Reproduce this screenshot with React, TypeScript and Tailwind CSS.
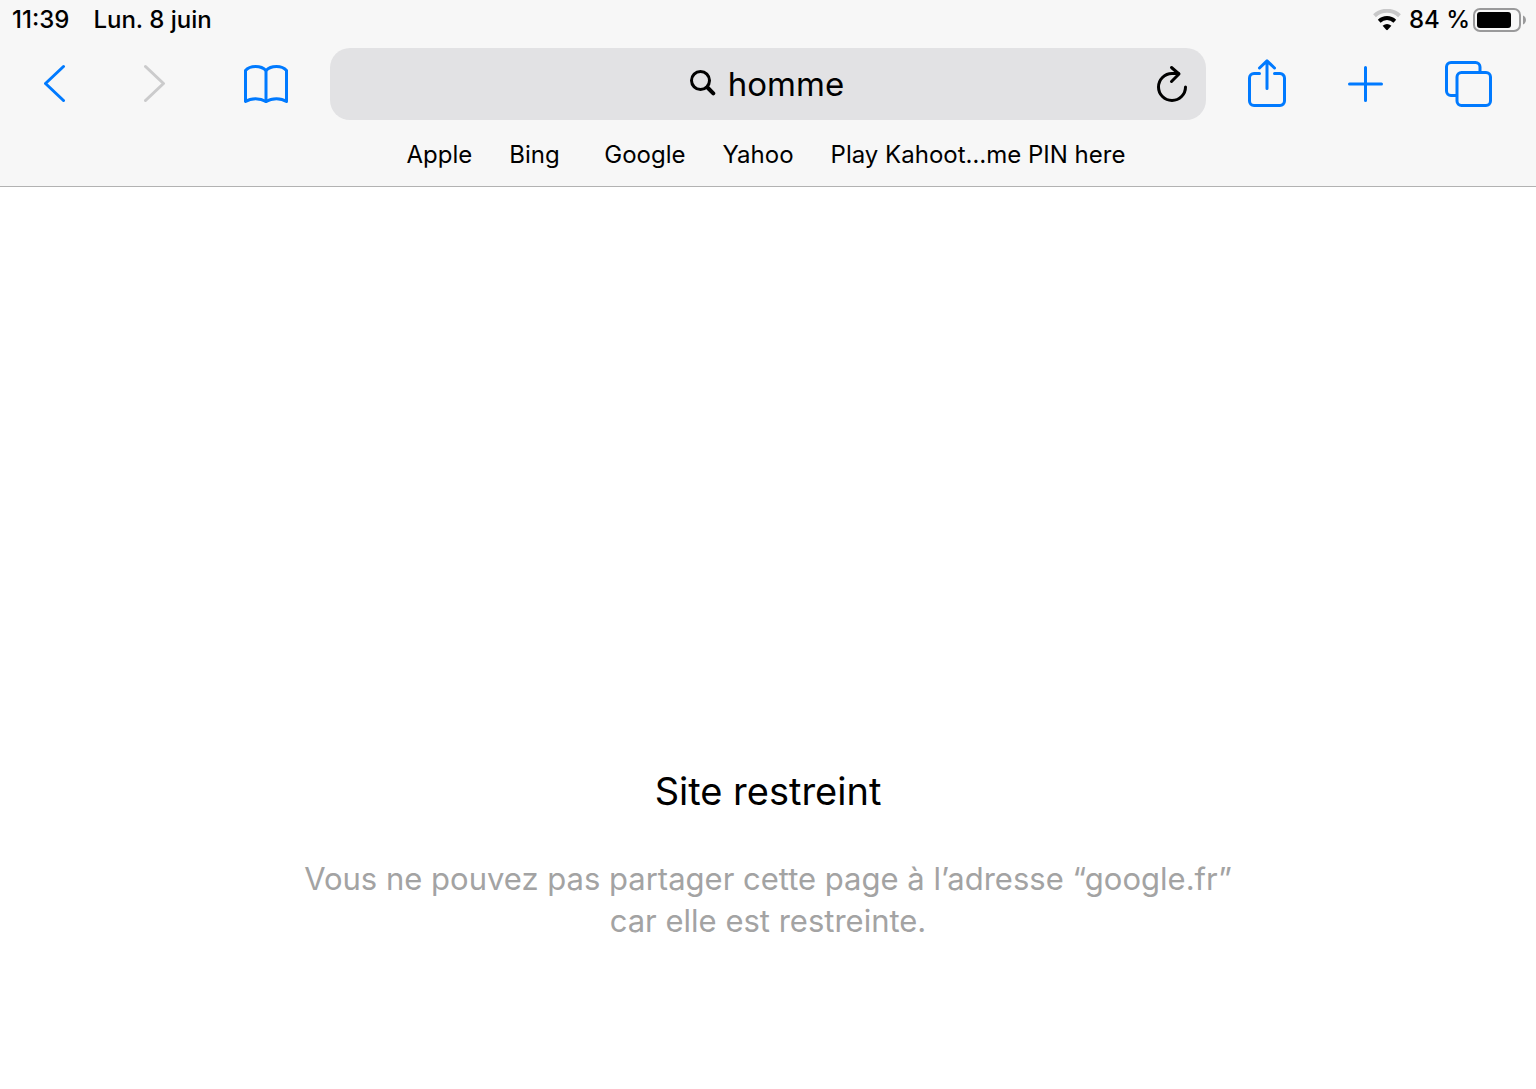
import React from 'react';

const bookmarks = [
  { title: 'Apple', href: '#apple' },
  { title: 'Bing', href: '#bing' },
  { title: 'Google', href: '#google' },
  { title: 'Yahoo', href: '#yahoo' },
  { title: 'Play Kahoot…me PIN here', href: '#kahoot' },
];

const stroke = {
  fill: 'none',
  stroke: 'currentColor',
  strokeWidth: 3,
  strokeLinecap: 'round' as const,
  strokeLinejoin: 'round' as const,
};

function StatusBar() {
  return (
    <div className="flex h-10 items-center justify-between pl-3 pr-2.5 text-2xl font-medium">
      <div className="flex gap-6">
        <span>11:39</span>
        <span>Lun. 8 juin</span>
      </div>
      <div className="flex items-center">
        <svg width="28" height="22" viewBox="0 0 28 22" className="mr-2">
          <path d="M1.5 6.8 A18 18 0 0 1 26.5 6.8" fill="none" stroke="#c8c8c9" strokeWidth="4" />
          <path d="M6.2 12.2 A11.4 11.4 0 0 1 21.8 12.2" fill="none" stroke="#000" strokeWidth="4" />
          <path d="M9.6 16.8 Q14 13.2 18.4 16.8 L14.8 20.8 Q14 21.6 13.2 20.8 Z" fill="#000" />
        </svg>
        <span>84 %</span>
        <svg width="54" height="24" viewBox="0 0 54 24" className="ml-0.5">
          <rect x="2" y="1" width="46" height="22" rx="6" fill="none" stroke="#9a9a9b" strokeWidth="2" />
          <rect x="5" y="4" width="34" height="16" rx="3" fill="#000" />
          <path d="M51 7.5 Q54 9 54 12 Q54 15 51 16.5 Z" fill="#9a9a9b" />
        </svg>
      </div>
    </div>
  );
}

function AddressBar() {
  return (
    <div className="grid h-18 min-w-0 flex-1 grid-cols-[1fr_auto_1fr] items-center rounded-[20px] bg-[#e2e2e4] px-[18px]">
      <span />
      <label className="flex items-center gap-3 pr-0.5">
        <svg width="26" height="28" viewBox="0 0 26 28">
          <circle cx="10.5" cy="10.5" r="9" fill="none" stroke="#000" strokeWidth="3" />
          <path d="M17.5 17.5 L23.3 23.3" stroke="#000" strokeWidth="4" strokeLinecap="round" />
        </svg>
        <input
          type="text"
          aria-label="Adresse"
          defaultValue="homme"
          className="bg-transparent text-[33px] leading-10 outline-none [field-sizing:content]"
        />
      </label>
      <button type="button" aria-label="Recharger" className="justify-self-end">
        <svg width="32" height="40" viewBox="0 0 32 40" {...stroke}>
          <path d="M29.5 23 A13.5 13.5 0 1 1 16 9.5 H22.5" />
          <path d="M15.5 3.5 L23 10 L15.5 17.5" />
        </svg>
      </button>
    </div>
  );
}

function Toolbar() {
  return (
    <div className="mt-2 flex items-center gap-[42px] px-11 text-[#007aff]">
      <div className="flex items-center gap-[78px]">
        <button type="button" aria-label="Précédent">
          <svg width="22" height="40" viewBox="0 0 22 40" {...stroke}>
            <path d="M19.5 2.5 L1.5 19.5 L19.5 36.5" />
          </svg>
        </button>
        <button type="button" aria-label="Suivant" disabled className="text-[#cbcbcc]">
          <svg width="22" height="40" viewBox="0 0 22 40" {...stroke}>
            <path d="M1.5 2.5 L19.5 19.5 L1.5 36.5" />
          </svg>
        </button>
        <button type="button" aria-label="Signets">
          <svg width="44" height="40" viewBox="0 0 44 40" {...stroke}>
            <path d="M1.5 37.5 V6.5 C6 1.2 17 1.2 22 6.5 C27 1.2 38 1.2 42.5 6.5 V37.5 C37 33.8 28 33.8 22 37.5 C16 33.8 7 33.8 1.5 37.5 Z" />
            <path d="M22 6.5 V37.5" />
          </svg>
        </button>
      </div>
      <div className="flex min-w-0 flex-1 text-black">
        <AddressBar />
      </div>
      <div className="flex items-center gap-[61px]">
        <button type="button" aria-label="Partager">
          <svg width="38" height="50" viewBox="0 0 38 50" {...stroke}>
            <path d="M11.5 14.5 H6 A4.5 4.5 0 0 0 1.5 19 V42 A4.5 4.5 0 0 0 6 46.5 H32 A4.5 4.5 0 0 0 36.5 42 V19 A4.5 4.5 0 0 0 32 14.5 H26.5" />
            <path d="M19 2 V29.5 M11.5 9 L19 1.8 L26.5 9" />
          </svg>
        </button>
        <button type="button" aria-label="Nouvel onglet">
          <svg width="36" height="36" viewBox="0 0 36 36" {...stroke}>
            <path d="M2.5 18 H34.5 M18.5 1.5 V34.5" />
          </svg>
        </button>
        <button type="button" aria-label="Onglets">
          <svg width="48" height="48" viewBox="0 0 48 48" {...stroke}>
            <rect x="13" y="12.5" width="33.5" height="33" rx="4.5" />
            <path d="M36 12 V7 A4.5 4.5 0 0 0 31.5 2.5 H7 A4.5 4.5 0 0 0 2.5 7 V31 A4.5 4.5 0 0 0 7 35.5 H12.5" />
          </svg>
        </button>
      </div>
    </div>
  );
}

export default function App() {
  return (
    <div className="min-h-screen bg-white font-['Inter',sans-serif] text-black">
      <header className="border-b border-[#b2b2b2] bg-[#f7f7f7]">
        <StatusBar />
        <Toolbar />
        <nav className="flex h-[66px] items-center justify-center gap-[37px] pb-1 pr-1 pt-2 text-2xl">
          {bookmarks.map((b) => (
            <a key={b.title} href={b.href} className="min-w-[58px]">
              {b.title}
            </a>
          ))}
        </nav>
      </header>
      <main className="px-6 pt-[580px] text-center">
        <h1 className="text-[38px] leading-12">Site restreint</h1>
        <p className="mt-[43px] text-[31px] leading-[42px] text-[#a3a3a3]">
          Vous ne pouvez pas partager cette page à l’adresse “google.fr”
          <br />
          car elle est restreinte.
        </p>
      </main>
    </div>
  );
}
